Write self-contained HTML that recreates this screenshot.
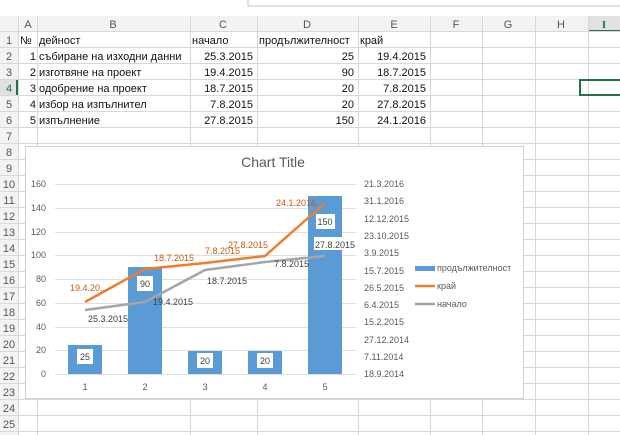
<!DOCTYPE html>
<html><head><meta charset="utf-8"><style>
body{margin:0;width:620px;height:435px;overflow:hidden;background:#fff;font-family:"Liberation Sans","DejaVu Sans",sans-serif;position:relative}
.a{position:absolute;white-space:nowrap}
</style></head><body>
<svg width="620" height="435" style="position:absolute;left:0;top:0" font-family="Liberation Sans, DejaVu Sans, sans-serif">
<rect x="248" y="-2" width="380" height="8" fill="#fff" stroke="#c6c6c6"/>
<rect x="0" y="16" width="620" height="16" fill="#f3f3f3"/>
<rect x="0" y="16" width="18" height="420" fill="#f3f3f3"/>
<rect x="588" y="16" width="32" height="16" fill="#e1e1e1"/>
<line x1="588" y1="31" x2="620" y2="31" stroke="#217346" stroke-width="2"/>
<rect x="0" y="80" width="18" height="16" fill="#e1e1e1"/>
<line x1="17" y1="80" x2="17" y2="96" stroke="#217346" stroke-width="2"/>
<g stroke="#d8d8d8" stroke-width="1">
<line x1="18.5" y1="16" x2="18.5" y2="435"/><line x1="37.5" y1="16" x2="37.5" y2="435"/><line x1="190.5" y1="16" x2="190.5" y2="435"/><line x1="257.5" y1="16" x2="257.5" y2="435"/><line x1="358.5" y1="16" x2="358.5" y2="435"/><line x1="430.5" y1="16" x2="430.5" y2="435"/><line x1="482.5" y1="16" x2="482.5" y2="435"/><line x1="535.5" y1="16" x2="535.5" y2="435"/><line x1="588.5" y1="16" x2="588.5" y2="435"/>
<line x1="0" y1="31.5" x2="620" y2="31.5"/><line x1="0" y1="47.5" x2="620" y2="47.5"/><line x1="0" y1="63.5" x2="620" y2="63.5"/><line x1="0" y1="79.5" x2="620" y2="79.5"/><line x1="0" y1="95.5" x2="620" y2="95.5"/><line x1="0" y1="111.5" x2="620" y2="111.5"/><line x1="0" y1="127.5" x2="620" y2="127.5"/><line x1="0" y1="143.5" x2="620" y2="143.5"/><line x1="0" y1="159.5" x2="620" y2="159.5"/><line x1="0" y1="175.5" x2="620" y2="175.5"/><line x1="0" y1="191.5" x2="620" y2="191.5"/><line x1="0" y1="207.5" x2="620" y2="207.5"/><line x1="0" y1="223.5" x2="620" y2="223.5"/><line x1="0" y1="239.5" x2="620" y2="239.5"/><line x1="0" y1="255.5" x2="620" y2="255.5"/><line x1="0" y1="271.5" x2="620" y2="271.5"/><line x1="0" y1="287.5" x2="620" y2="287.5"/><line x1="0" y1="303.5" x2="620" y2="303.5"/><line x1="0" y1="319.5" x2="620" y2="319.5"/><line x1="0" y1="335.5" x2="620" y2="335.5"/><line x1="0" y1="351.5" x2="620" y2="351.5"/><line x1="0" y1="367.5" x2="620" y2="367.5"/><line x1="0" y1="383.5" x2="620" y2="383.5"/><line x1="0" y1="399.5" x2="620" y2="399.5"/><line x1="0" y1="415.5" x2="620" y2="415.5"/><line x1="0" y1="431.5" x2="620" y2="431.5"/>
</g>
<rect x="580" y="80" width="41" height="15" fill="none" stroke="#217346" stroke-width="2"/>
<g font-size="11" fill="#555" text-anchor="middle">
<text x="28" y="28">A</text><text x="113" y="28">B</text><text x="223" y="28">C</text><text x="307" y="28">D</text><text x="394" y="28">E</text><text x="456" y="28">F</text><text x="508" y="28">G</text><text x="561" y="28">H</text><text x="604" y="28" font-weight="bold" fill="#217346" font-family="Liberation Serif">I</text>
</g>
<g font-size="11" fill="#555" text-anchor="middle">
<text x="9" y="44">1</text><text x="9" y="60">2</text><text x="9" y="76">3</text><text x="9" y="92" fill="#217346">4</text><text x="9" y="108">5</text><text x="9" y="124">6</text><text x="9" y="140">7</text><text x="9" y="156">8</text><text x="9" y="172">9</text><text x="9" y="188">10</text><text x="9" y="204">11</text><text x="9" y="220">12</text><text x="9" y="236">13</text><text x="9" y="252">14</text><text x="9" y="268">15</text><text x="9" y="284">16</text><text x="9" y="300">17</text><text x="9" y="316">18</text><text x="9" y="332">19</text><text x="9" y="348">20</text><text x="9" y="364">21</text><text x="9" y="380">22</text><text x="9" y="396">23</text><text x="9" y="412">24</text><text x="9" y="428">25</text>
</g>
<g font-size="11" fill="#111">
<text x="20" y="44">№</text><text x="39" y="44">дейност</text><text x="192" y="44">начало</text><text x="259" y="44">продължителност</text><text x="360" y="44">край</text>
<text x="39" y="60">събиране на изходни данни</text><text x="39" y="76">изготвяне на проект</text><text x="39" y="92">одобрение на проект</text><text x="39" y="108">избор на изпълнител</text><text x="39" y="124">изпълнение</text>
<g text-anchor="end">
<text x="36" y="60">1</text><text x="36" y="76">2</text><text x="36" y="92">3</text><text x="36" y="108">4</text><text x="36" y="124">5</text>
<text x="253" y="60">25.3.2015</text><text x="253" y="76">19.4.2015</text><text x="253" y="92">18.7.2015</text><text x="253" y="108">7.8.2015</text><text x="253" y="124">27.8.2015</text>
<text x="354" y="60">25</text><text x="354" y="76">90</text><text x="354" y="92">20</text><text x="354" y="108">20</text><text x="354" y="124">150</text>
<text x="426" y="60">19.4.2015</text><text x="426" y="76">18.7.2015</text><text x="426" y="92">7.8.2015</text><text x="426" y="108">27.8.2015</text><text x="426" y="124">24.1.2016</text>
</g></g>
<!-- chart -->
<rect x="25.5" y="146.5" width="498" height="252" fill="#fff" stroke="#d0d0d0"/>
<text x="273" y="167" font-size="14" fill="#595959" text-anchor="middle">Chart Title</text>
<g stroke="#e0e0e0"><line x1="55" y1="184.5" x2="356" y2="184.5"/><line x1="55" y1="208.5" x2="356" y2="208.5"/><line x1="55" y1="232.5" x2="356" y2="232.5"/><line x1="55" y1="255.5" x2="356" y2="255.5"/><line x1="55" y1="279.5" x2="356" y2="279.5"/><line x1="55" y1="303.5" x2="356" y2="303.5"/><line x1="55" y1="327.5" x2="356" y2="327.5"/><line x1="55" y1="350.5" x2="356" y2="350.5"/><line x1="55" y1="374.5" x2="356" y2="374.5"/></g>
<g font-size="9" fill="#595959" text-anchor="end"><text x="46" y="187">160</text><text x="46" y="211">140</text><text x="46" y="235">120</text><text x="46" y="258">100</text><text x="46" y="282">80</text><text x="46" y="306">60</text><text x="46" y="330">40</text><text x="46" y="353">20</text><text x="46" y="377">0</text></g>
<g font-size="9" fill="#595959"><text x="364" y="187">21.3.2016</text><text x="364" y="204">31.1.2016</text><text x="364" y="222">12.12.2015</text><text x="364" y="239">23.10.2015</text><text x="364" y="256">3.9.2015</text><text x="364" y="274">15.7.2015</text><text x="364" y="291">26.5.2015</text><text x="364" y="308">6.4.2015</text><text x="364" y="325">15.2.2015</text><text x="364" y="343">27.12.2014</text><text x="364" y="360">7.11.2014</text><text x="364" y="377">18.9.2014</text></g>
<g font-size="9" fill="#595959" text-anchor="middle"><text x="85" y="390">1</text><text x="145" y="390">2</text><text x="205" y="390">3</text><text x="265" y="390">4</text><text x="325" y="390">5</text></g>
<g fill="#5b9bd5"><rect x="68" y="345" width="34" height="29"/><rect x="128" y="267" width="34" height="107"/><rect x="188" y="351" width="34" height="23"/><rect x="248" y="351" width="34" height="23"/><rect x="308" y="196" width="34" height="178"/></g>
<polyline points="85,310 145,302 205,270 265,262 325,256" fill="none" stroke="#a5a5a5" stroke-width="2.5"/>
<polyline points="85,302 145,269 205,263 265,256 325,203" fill="none" stroke="#ed7d31" stroke-width="2.5"/>
<g fill="#fff"><rect x="77" y="349" width="16" height="15"/><rect x="137" y="276" width="16" height="15"/><rect x="197" y="353" width="16" height="15"/><rect x="257" y="353" width="16" height="15"/><rect x="316" y="214" width="19" height="15"/><rect x="314" y="237" width="42" height="13"/></g>
<g font-size="9" fill="#404040" text-anchor="middle"><text x="85" y="360">25</text><text x="145" y="287">90</text><text x="205" y="364">20</text><text x="265" y="364">20</text><text x="325" y="225">150</text></g>
<g font-size="9" fill="#404040"><text x="315" y="248">27.8.2015</text><text x="88" y="322">25.3.2015</text><text x="153" y="305">19.4.2015</text><text x="207" y="284">18.7.2015</text><text x="274" y="267">7.8.2015</text></g>
<g font-size="9" fill="#c55a11"><text x="70" y="291">19.4.20...</text><text x="154" y="261">18.7.2015</text><text x="205" y="254">7.8.2015</text><text x="228" y="248">27.8.2015</text><text x="276" y="206">24.1.2016</text></g>
<rect x="415" y="266" width="20" height="5" fill="#5b9bd5"/><line x1="415" y1="286" x2="435" y2="286" stroke="#ed7d31" stroke-width="2.5"/><line x1="415" y1="304" x2="435" y2="304" stroke="#a5a5a5" stroke-width="2.5"/>
<g font-size="9" fill="#595959"><text x="437" y="271">продължителност</text><text x="437" y="289">край</text><text x="437" y="307">начало</text></g>
</svg>
</body></html>
